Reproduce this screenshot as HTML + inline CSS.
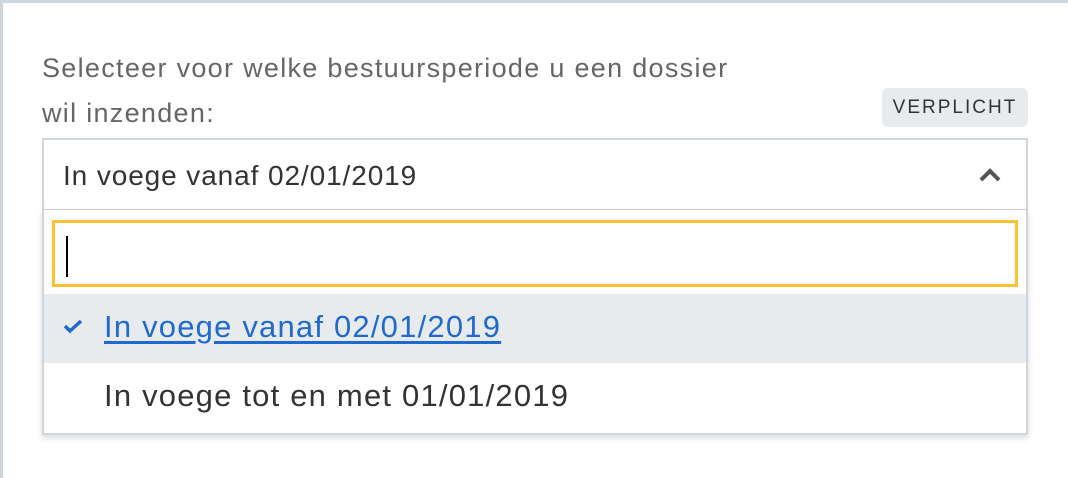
<!DOCTYPE html>
<html><head><style>
body{margin:0;width:1068px;height:478px;background:#fff;font-family:"Liberation Sans",sans-serif;overflow:hidden;position:relative}
.frame{position:absolute;left:0;top:0;width:1068px;height:478px;border-left:3px solid #cfd5dd;border-top:3px solid #cfd5dd;box-sizing:border-box}
.lbl{position:absolute;left:42px;color:#666;font-size:27px;letter-spacing:1.3px;white-space:nowrap}
.badge{position:absolute;left:882px;top:88px;width:146px;height:39px;background:#e8ebee;border-radius:6px;color:#333;font-size:19px;letter-spacing:2px;text-align:center;line-height:40px}
.sel{position:absolute;left:42px;top:138px;width:986px;height:73px;border:2px solid #cfd5dd;box-sizing:border-box}
.sel span{position:absolute;left:19px;top:20px;font-size:28px;letter-spacing:0.9px;color:#333}
.dd{position:absolute;left:42px;top:210px;width:986px;height:225px;border:2px solid #cfd5dd;border-top:none;box-sizing:border-box;box-shadow:0 3px 6px rgba(0,0,0,.15);background:#fff}
.search{position:absolute;left:52px;top:220px;width:966px;height:67px;border:3px solid #ffc133;box-sizing:border-box}
.caret{position:absolute;left:11px;top:13px;width:2px;height:41px;background:#000}
.opt{position:absolute;left:44px;width:982px;height:69px}
.opt span{position:absolute;left:60px;top:15px;font-size:31px;letter-spacing:1.2px;white-space:nowrap}
</style></head><body>
<div class="frame"></div>
<div class="lbl" style="top:53px">Selecteer voor welke bestuursperiode u een dossier</div>
<div class="lbl" style="top:98px">wil inzenden:</div>
<div class="badge">VERPLICHT</div>
<div class="sel"><span>In voege vanaf 02/01/2019</span>
<svg style="position:absolute;left:935px;top:28px" width="22" height="14" viewBox="0 0 22 14"><path d="M2 12 L11 3 L20 12" fill="none" stroke="#555" stroke-width="4"/></svg></div>
<div class="dd"></div>
<div class="search"><div class="caret"></div></div>
<div class="opt" style="top:294px;background:#e8ebee"><svg style="position:absolute;left:19px;top:25px" width="20" height="15" viewBox="0 0 20 15"><path d="M2 7 L7 12 L18 2" fill="none" stroke="#1f6ad0" stroke-width="3.5"/></svg><span style="color:#1f6ad0;text-decoration:underline;text-underline-offset:4px">In voege vanaf 02/01/2019</span></div>
<div class="opt" style="top:363px"><span style="color:#333">In voege tot en met 01/01/2019</span></div>
</body></html>
